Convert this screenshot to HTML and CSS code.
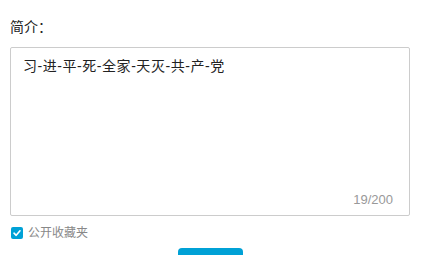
FILE: index.html
```html
<!DOCTYPE html>
<html lang="zh-CN">
<head>
    <meta charset="UTF-8">
    <title>编辑收藏夹</title>
    <link rel="stylesheet" href="styles.css">
</head>
<body>

<div class="container">
    <div class="form-label">简介：</div>
    <div class="intro-box">
        <div class="intro-text">习-进-平-死-全家-天灭-共-产-党</div>
        <div class="counter">19/200</div>
    </div>
    <label class="public-check">
        <span class="check-icon">
            <svg width="10" height="10" viewBox="0 0 10 10"><path d="M2 5.2 L4.2 7.3 L8 2.8" fill="none" stroke="#fff" stroke-width="1.6" stroke-linecap="round" stroke-linejoin="round"/></svg>
        </span>
        公开收藏夹
    </label>
    <div class="actions">
        <button class="submit-btn">确定</button>
    </div>
</div>

</body>
</html>
```

FILE: styles.css
```css
body {
    font-family: "Liberation Sans", "Noto Sans CJK SC", sans-serif;
    background-color: #fff;
    margin: 0;
    padding: 0;
    overflow: hidden;
}
.container {
    padding: 18px 0 0 10px;
    width: 400px;
}
.form-label {
    font-size: 14px;
    line-height: 18px;
    color: #222;
    margin-bottom: 11px;
}
.intro-box {
    border: 1px solid #ccc;
    border-radius: 2px;
    box-sizing: border-box;
    height: 169px;
    display: flex;
    flex-direction: column;
    justify-content: space-between;
    padding: 8px 16px 7px 12px;
}
.intro-text {
    font-size: 14px;
    line-height: 20px;
    letter-spacing: 0.55px;
    color: #222;
}
.counter {
    text-align: right;
    font-size: 13px;
    line-height: 16px;
    color: #999;
}
.public-check {
    display: flex;
    align-items: center;
    gap: 5px;
    margin-top: 9px;
    margin-left: 1px;
    font-size: 12px;
    line-height: 16px;
    color: #888;
}
.check-icon {
    width: 12px;
    height: 12px;
    background-color: #00a1d6;
    border-radius: 2px;
    display: flex;
    align-items: center;
    justify-content: center;
}
.actions {
    display: flex;
    justify-content: center;
    margin-top: 7px;
    margin-left: -10px;
    width: 420px;
}
.submit-btn {
    width: 65px;
    height: 32px;
    border: none;
    border-radius: 4px;
    background-color: #00a1d6;
    color: #fff;
    font-size: 14px;
}
```
